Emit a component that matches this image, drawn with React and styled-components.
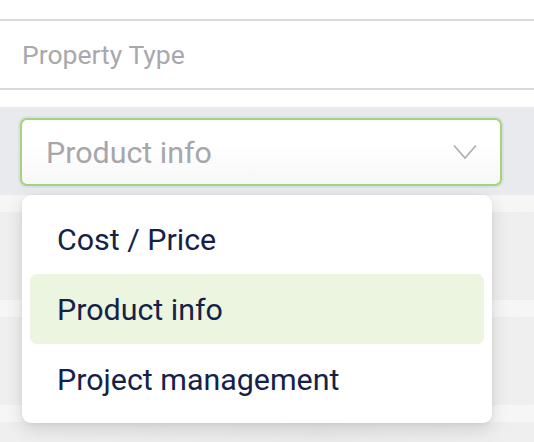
import React from "react";
import styled, { createGlobalStyle } from "styled-components";

const Global = createGlobalStyle`
  html, body { margin: 0; padding: 0; background: #ffffff; }
  body { font-family: Roboto, "Liberation Sans", sans-serif; width: 534px; height: 442px; overflow: hidden; }
`;

const Page = styled.div`
  display: flex;
  flex-direction: column;
  width: 534px;
  height: 442px;
  overflow: hidden;
  background: #ececee;
  & > * { flex-shrink: 0; }
`;

const TopSpace = styled.div`
  height: 19px;
  background: #fff;
  border-bottom: 2px solid #dadade;
`;

const LabelRow = styled.div`
  height: 67px;
  display: flex;
  align-items: center;
  padding-left: 22px;
  background: #fff;
  border-bottom: 2px solid #dadade;
  font-size: 26.5px;
  color: #a8a8ad;
`;

const Spacer = styled.div`
  height: 17px;
  background: #fff;
`;

const SelectBand = styled.div`
  position: relative;
  height: 88px;
  background: #e9eaee;
  padding: 9px 0 0 18px;
  box-sizing: border-box;
`;

const Ring = styled.div`
  width: 486px;
  height: 72px;
  box-sizing: border-box;
  padding: 2px;
  border-radius: 9px;
  background: #d5e1ed;
`;

const SelectBox = styled.div`
  height: 68px;
  box-sizing: border-box;
  border: 2px solid #a7d372;
  border-radius: 7px;
  background: linear-gradient(#ffffff 40%, #f7f7f8);
  display: flex;
  align-items: center;
  justify-content: space-between;
  padding: 0 23px 0 24px;
  font-size: 30.4px;
  color: #a6a6ab;
`;

const Menu = styled.div`
  position: absolute;
  left: 22px;
  top: 88px;
  width: 470px;
  box-sizing: border-box;
  padding: 9px 8px;
  background: #fff;
  border-radius: 9px;
  box-shadow: 0 6px 18px rgba(0, 0, 0, 0.13), 0 1px 4px rgba(0, 0, 0, 0.06);
  display: flex;
  flex-direction: column;
  z-index: 2;
`;

const Item = styled.div`
  height: 70px;
  display: flex;
  align-items: center;
  padding-left: 27px;
  border-radius: 7px;
  font-size: 30.4px;
  color: #14224a;
  background: ${(p) => (p.$active ? "#ebf5df" : "transparent")};
`;

const GhostGap = styled.div`
  height: 17px;
  background: #f6f6f7;
`;

const GhostRow = styled.div`
  height: 88px;
  background: linear-gradient(90deg, #efeff0, #ebebec 60%, #efeff0);
`;

const Chevron = () => (
  <svg width="24" height="16" viewBox="0 0 24 16" fill="none">
    <path d="M1 1.5 L12 14 L23 1.5" stroke="#acacb0" strokeWidth="1.6" />
  </svg>
);

export default function App() {
  const options = ["Cost / Price", "Product info", "Project management"];
  return (
    <>
      <Global />
      <Page>
        <TopSpace />
        <LabelRow>Property Type</LabelRow>
        <Spacer />
        <SelectBand>
          <Ring>
            <SelectBox>
              <span>Product info</span>
              <Chevron />
            </SelectBox>
          </Ring>
          <Menu>
            {options.map((o) => (
              <Item key={o} $active={o === "Product info"}>
                {o}
              </Item>
            ))}
          </Menu>
        </SelectBand>
        <GhostGap />
        <GhostRow />
        <GhostGap />
        <GhostRow />
        <GhostGap />
        <GhostRow />
      </Page>
    </>
  );
}
